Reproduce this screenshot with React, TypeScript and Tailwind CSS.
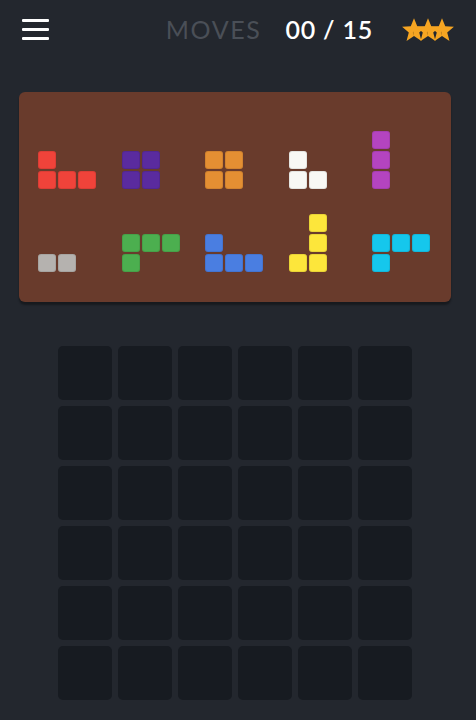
import React from "react";

type Piece = { color: string; cells: [number, number][] };

const pieces: Piece[] = [
	{ color: "bg-[#f0433a]", cells: [[0, 0], [0, 1], [1, 1], [2, 1]] },
	{ color: "bg-[#5a2b9f]", cells: [[0, 0], [1, 0], [0, 1], [1, 1]] },
	{ color: "bg-[#e48f33]", cells: [[0, 0], [1, 0], [0, 1], [1, 1]] },
	{ color: "bg-[#f8f8f5]", cells: [[0, 0], [0, 1], [1, 1]] },
	{ color: "bg-[#b444bf]", cells: [[0, 0], [0, 1], [0, 2]] },
	{ color: "bg-[#b5b2af]", cells: [[0, 0], [1, 0]] },
	{ color: "bg-[#4caf4f]", cells: [[0, 0], [1, 0], [2, 0], [0, 1]] },
	{ color: "bg-[#4a7ee1]", cells: [[0, 0], [0, 1], [1, 1], [2, 1]] },
	{ color: "bg-[#fde63b]", cells: [[1, 0], [1, 1], [0, 2], [1, 2]] },
	{ color: "bg-[#15c7ec]", cells: [[0, 0], [1, 0], [2, 0], [0, 1]] },
];

const PieceView = ({ piece }: { piece: Piece }) => {
	const cols = Math.max(...piece.cells.map((c) => c[0])) + 1;
	const rows = Math.max(...piece.cells.map((c) => c[1])) + 1;
	return (
		<div
			className="grid gap-[2px]"
			style={{
				gridTemplateColumns: `repeat(${cols}, 18px)`,
				gridTemplateRows: `repeat(${rows}, 18px)`,
			}}
		>
			{piece.cells.map(([x, y], i) => (
				<div
					key={i}
					className={`${piece.color} rounded-[3px] shadow-[inset_0_0_0_1px_rgba(0,0,0,0.08)]`}
					style={{ gridColumnStart: x + 1, gridRowStart: y + 1 }}
				/>
			))}
		</div>
	);
};

const Star = () => (
	<svg width="26" height="25" viewBox="0 0 24 23" className="-mr-[12px] last:mr-0">
		<path
			d="M12 1 L15 8.6 L23 9 L16.8 14.2 L18.9 22 L12 17.6 L5.1 22 L7.2 14.2 L1 9 L9 8.6 Z"
			fill="#f6a522"
		/>
		<path d="M12 17.6 L10.8 14.5 L12 13 Z" fill="#5a3a10" opacity="0.3" />
	</svg>
);

const App = () => {
	return (
		<div className="w-[476px] h-[720px] bg-[#23272e] font-['Lato',sans-serif] overflow-hidden">
			<div className="flex items-center h-[58px] pl-[22px] pr-[21px] pt-[1px]">
				<div className="flex flex-col gap-[6px] w-[27px]">
					<div className="h-[3px] bg-white rounded-[1px]" />
					<div className="h-[3px] bg-white rounded-[1px]" />
					<div className="h-[3px] bg-white rounded-[1px]" />
				</div>
				<div className="flex-1" />
				<span className="text-[25px] leading-none tracking-[1.6px] text-[#4a4f57] mr-[24px]">MOVES</span>
				<span className="text-[25px] leading-none font-semibold tracking-[0.8px] text-white">00 / 15</span>
				<div className="flex items-center ml-[28px]">
					<Star />
					<Star />
					<Star />
				</div>
			</div>

			<div className="mt-[34px] ml-[19px] w-[432px] h-[210px] bg-[#693b2c] rounded-[6px] shadow-[0_3px_2px_rgba(0,0,0,0.35)] pl-[19px] pt-[17px]">
				<div className="grid grid-cols-[repeat(5,83.5px)] gap-y-[3px]">
					{pieces.map((p, i) => (
						<div key={i} className="h-[80px] flex items-end">
							<PieceView piece={p} />
						</div>
					))}
				</div>
			</div>

			<div className="mt-[44px] ml-[58px] grid grid-cols-[repeat(6,54px)] gap-[6px]">
				{Array.from({ length: 36 }).map((_, i) => (
					<div key={i} className="h-[54px] bg-[#171b21] rounded-[5px]" />
				))}
			</div>
		</div>
	);
};

export default App;
